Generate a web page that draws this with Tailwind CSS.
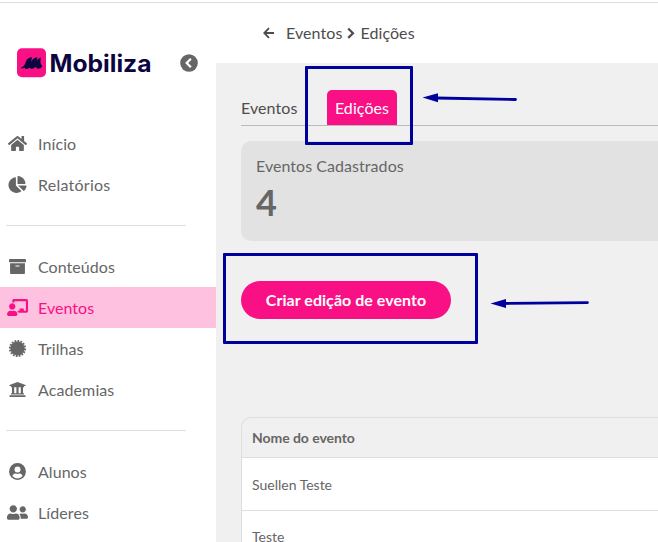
<!DOCTYPE html>
<html lang="pt-BR">
<head>
<meta charset="utf-8">
<title>Mobiliza</title>
<script src="https://cdn.jsdelivr.net/npm/@tailwindcss/browser@4"></script>
</head>
<body class="relative flex h-[542px] w-[658px] flex-col overflow-hidden bg-white font-['Lato',sans-serif] text-base text-[#666]">
<div class="h-[3px] shrink-0 border-b border-[#dedede]"></div>
<div class="flex min-h-0 flex-1">
  <aside class="w-[216px] shrink-0 tracking-[0.05px]">
    <div class="flex h-[120px] items-center pl-[17px]">
      <svg class="h-[30px] w-[136px] overflow-visible" viewBox="0 0 136 30">
        <rect y=".3" width="29" height="29" rx="5" fill="#f91084"/>
        <path d="M4 19.800C7 19 8 16 9 13.500c1-2.500 2.500-4 6-4.200l-1 4.700c1.500-3 3.500-4.500 6.500-4.700l-.8 3.700c1-2 2.500-3.300 4.300-3.600-.8 3.500-1 6.500 1.200 8.600-1 3-5.200 4-6.700.8-1.500 2-4.500 3-6 .8-1.800 2-4.600 2-5.200-.4-1 1.500-2.600 1.800-3.300.6z" fill="#0b0540"/>
        <text x="32.500" y="23.800" font-family="Inter, sans-serif" font-weight="700" font-size="24" letter-spacing="0" textLength="102" lengthAdjust="spacingAndGlyphs" fill="#0b0540">Mobiliza</text>
      </svg>
      <svg class="ml-[27px] size-[18px]" viewBox="0 0 18 18"><circle cx="9" cy="9" r="8.800" fill="#666"/><path d="M10.900 4.800 6.700 9l4.200 4.200" fill="none" stroke="#fff" stroke-width="2.300"/></svg>
    </div>
    <nav>
      <a class="flex h-[41px] items-center"><svg class="ml-2 h-[17px] w-[19px]" viewBox="0 0 576 512" fill="currentColor"><path d="M280.370 148.260L96 300.110V464a16 16 0 0 0 16 16l112.060-.29a16 16 0 0 0 15.920-16V368a16 16 0 0 1 16-16h64a16 16 0 0 1 16 16v95.640a16 16 0 0 0 16 16.050L464 480a16 16 0 0 0 16-16V300L295.670 148.260a12.190 12.190 0 0 0-15.300 0zM571.600 251.470L488 182.560V44.050a12 12 0 0 0-12-12h-56a12 12 0 0 0-12 12v72.610L318.470 43a48 48 0 0 0-61 0L4.340 251.470a12 12 0 0 0-1.600 16.900l25.500 31A12 12 0 0 0 45.150 301l235.220-193.740a12.190 12.190 0 0 1 15.300 0L530.900 301a12 12 0 0 0 16.900-1.600l25.500-31a12 12 0 0 0-1.700-16.930z"/></svg><span class="ml-[11px] tracking-[0.1px]">Início</span></a>
      <a class="flex h-[41px] items-center"><svg class="ml-2 h-[17px] w-[19px]" viewBox="0 0 544 512" fill="currentColor"><path d="M527.790 288H290.500l158.030 158.030c6.040 6.040 15.980 6.530 22.190.68 38.700-36.460 65.320-85.610 73.130-140.860 1.340-9.460-6.510-17.850-16.060-17.850zm-15.830-64.800C503.720 103.740 408.260 8.280 288.800.04 279.680-.59 272 7.100 272 16.240V240h223.770c9.140 0 16.820-7.680 16.190-16.800zM224 288V50.710c0-9.550-8.390-17.400-17.840-16.060C86.990 51.490-4.100 155.600.14 280.370 4.500 408.510 114.830 513.590 243.030 511.980c50.400-.63 96.970-16.870 135.260-44.030 7.900-5.600 8.420-17.230 1.570-24.080L224 288z"/></svg><span class="ml-[11px] tracking-[0.25px]">Relatórios</span></a>
      <div class="flex h-[41px] items-center pl-1.5"><div class="h-px w-[180px] bg-[#dedede]"></div></div>
      <a class="flex h-[41px] items-center"><svg class="ml-[9px] size-[17px]" viewBox="0 0 512 512" fill="currentColor"><path d="M32 448c0 17.700 14.300 32 32 32h384c17.700 0 32-14.300 32-32V160H32v288zm160-212c0-6.600 5.400-12 12-12h104c6.600 0 12 5.400 12 12v8c0 6.600-5.400 12-12 12H204c-6.600 0-12-5.400-12-12v-8zM480 32H32C14.300 32 0 46.300 0 64v48c0 8.800 7.200 16 16 16h480c8.800 0 16-7.200 16-16V64c0-17.700-14.300-32-32-32z"/></svg><span class="ml-3">Conteúdos</span></a>
      <a class="flex h-[41px] items-center bg-[#ffc1e0] text-[#f91084]"><svg class="ml-[7px] h-[17px] w-[21px]" viewBox="0 0 640 512" fill="currentColor"><path d="M208 352c-2.390 0-4.780.35-7.060 1.090C187.980 357.300 174.350 360 160 360c-14.370 0-28-2.700-40.950-6.910-2.280-.74-4.660-1.090-7.050-1.090C49.940 352-.33 402.480 0 464.620.14 490.880 21.730 512 48 512h224c26.270 0 47.860-21.120 48-47.380.33-62.140-49.940-112.620-112-112.620zm-48-32c53.020 0 96-42.980 96-96s-42.980-96-96-96-96 42.980-96 96 42.980 96 96 96zM592 0H208c-26.470 0-48 22.250-48 49.590V96c23.420 0 45.100 6.780 64 17.800V64h352v288h-64v-64H384v64h-76.240c19.100 16.690 33.120 38.730 39.690 64H592c26.470 0 48-22.250 48-49.590V49.590C640 22.250 618.470 0 592 0z"/></svg><span class="ml-2.5">Eventos</span></a>
      <a class="flex h-[41px] items-center"><svg class="ml-[9px] size-[17px]" viewBox="-8.500 -8.500 17 17" fill="currentColor"><circle r="7.100"/><circle r="7.600" fill="none" stroke="currentColor" stroke-width="2" pathLength="32" stroke-dasharray="1.150 .85"/></svg><span class="ml-3 tracking-[0.1px]">Trilhas</span></a>
      <a class="flex h-[41px] items-center"><svg class="ml-[9px] size-[17px]" viewBox="0 0 17 17" fill="currentColor"><path d="M8.500 1 16.500 4v1.100H.5V4zM2 5h13v1.300H2zM3 6h2.200v6.500H3zM7.400 6h2.200v6.500H7.400zM11.800 6H14v6.500h-2.200zM2 12.300h13v1.300H2zM.5 14.200h16V16H.5z"/></svg><span class="ml-3 tracking-[0.1px]">Academias</span></a>
      <div class="flex h-[41px] items-center pl-1.5"><div class="h-px w-[180px] bg-[#dedede]"></div></div>
      <a class="flex h-[41px] items-center"><svg class="ml-[9px] size-[17px]" viewBox="0 0 17 17"><circle cx="8.500" cy="8.500" r="8.400" fill="currentColor"/><circle cx="8.500" cy="6.600" r="3" fill="#fff"/><path d="M3.300 13.100c.8-2 2.200-2.600 3.500-2.600 1 .5 2.400.5 3.400 0 1.300 0 2.700.6 3.500 2.600a7 7 0 0 1-10.400 0z" fill="#fff"/></svg><span class="ml-3">Alunos</span></a>
      <a class="flex h-[41px] items-center"><svg class="ml-[7px] h-[17px] w-[21px]" viewBox="0 0 640 512" fill="currentColor"><path d="M192 256c61.900 0 112-50.100 112-112S253.900 32 192 32 80 82.100 80 144s50.100 112 112 112zm76.800 32h-8.300c-20.800 10-43.900 16-68.500 16s-47.600-6-68.500-16h-8.300C51.600 288 0 339.600 0 403.200V432c0 26.500 21.500 48 48 48h288c26.500 0 48-21.500 48-48v-28.800c0-63.600-51.600-115.200-115.200-115.200zM480 256c53 0 96-43 96-96s-43-96-96-96-96 43-96 96 43 96 96 96zm48 32h-3.800c-13.900 4.800-28.600 8-44.200 8s-30.300-3.200-44.200-8H432c-20.400 0-39.200 5.900-55.700 15.400 24.400 26.300 39.700 61.200 39.700 99.800v38.400c0 2.200-.5 4.300-.6 6.400H592c26.500 0 48-21.500 48-48 0-61.900-50.100-112-112-112z"/></svg><span class="ml-2.5 tracking-[0.1px]">Líderes</span></a>
    </nav>
  </aside>
  <main class="flex min-w-0 flex-1 flex-col">
    <header class="flex h-[60px] shrink-0 items-center pl-[47px] tracking-[0.08px] text-[#4d4d4d]">
      <svg class="h-3 w-3" viewBox="0 0 12 12" fill="none" stroke="currentColor" stroke-width="1.800"><path d="M11 6H1.500M6 1.200 1.300 6 6 10.800"/></svg>
      <span class="ml-[11px]">Eventos</span>
      <svg class="mx-[5px] h-3 w-2" viewBox="0 0 8 12" fill="none" stroke="currentColor" stroke-width="2.200"><path d="M1.200 1.500 6 6.200 1.200 10.900"/></svg>
      <span>Edições</span>
    </header>
    <section class="flex flex-1 flex-col bg-[#f0f0f0] pl-[25px]">
      <div class="flex h-[63px] shrink-0 items-end border-b border-[#bababa] tracking-[0.08px] text-[#4d4d4d]">
        <span class="flex h-[35px] w-[86px] items-center">Eventos</span>
        <span class="flex h-[35px] w-[70px] items-center justify-center rounded-t-[5px] bg-[#f91084] text-white">Edições</span>
      </div>
      <div class="mt-[15px] h-[100px] shrink-0 rounded-l-[10px] bg-[#e2e2e2] pt-[13px] pl-[15px]">
        <div class="leading-6 tracking-[0.05px]">Eventos Cadastrados</div>
        <div class="mt-0.5 text-[36px] leading-[44px] font-bold">4</div>
      </div>
      <button class="mt-10 h-[38px] w-[210px] shrink-0 rounded-full bg-[#f91084] font-bold tracking-[0.04px] text-white">Criar edição de evento</button>
      <div class="mt-[98px] flex flex-1 flex-col overflow-hidden rounded-tl-[10px] border-t border-l border-[#dedede] text-sm">
        <div class="flex h-10 shrink-0 items-center border-b border-[#dedede] pl-2.5 font-bold tracking-[-0.05px]">Nome do evento</div>
        <div class="flex h-[53px] shrink-0 items-center border-b border-[#dedede] bg-white pl-2.5 pt-px">Suellen Teste</div>
        <div class="h-[31px] shrink-0 bg-white pt-4 pl-2.5 leading-5">Teste</div>
      </div>
    </section>
  </main>
</div>
<div class="absolute top-[66px] left-[305px] h-[79px] w-[108px] rounded-[1px] border-3 border-[#00009c]"></div>
<div class="absolute top-[253px] left-[223px] h-[91px] w-[255px] rounded-[1px] border-3 border-[#00009c]"></div>
<svg class="absolute top-[90px] left-[420px] h-5 w-[100px]" viewBox="0 0 100 20"><path d="M16 8 95.500 9.500" stroke="#00009c" stroke-width="2.800" stroke-linecap="round"/><path d="M2.500 7.500 18 3.300v9z" fill="#00009c"/></svg>
<svg class="absolute top-[293px] left-[488px] h-5 w-[105px]" viewBox="0 0 105 20"><path d="M16 10.500 99.500 9.600" stroke="#00009c" stroke-width="2.800" stroke-linecap="round"/><path d="M2.500 10.500 18 6v9z" fill="#00009c"/></svg>
</body>
</html>
